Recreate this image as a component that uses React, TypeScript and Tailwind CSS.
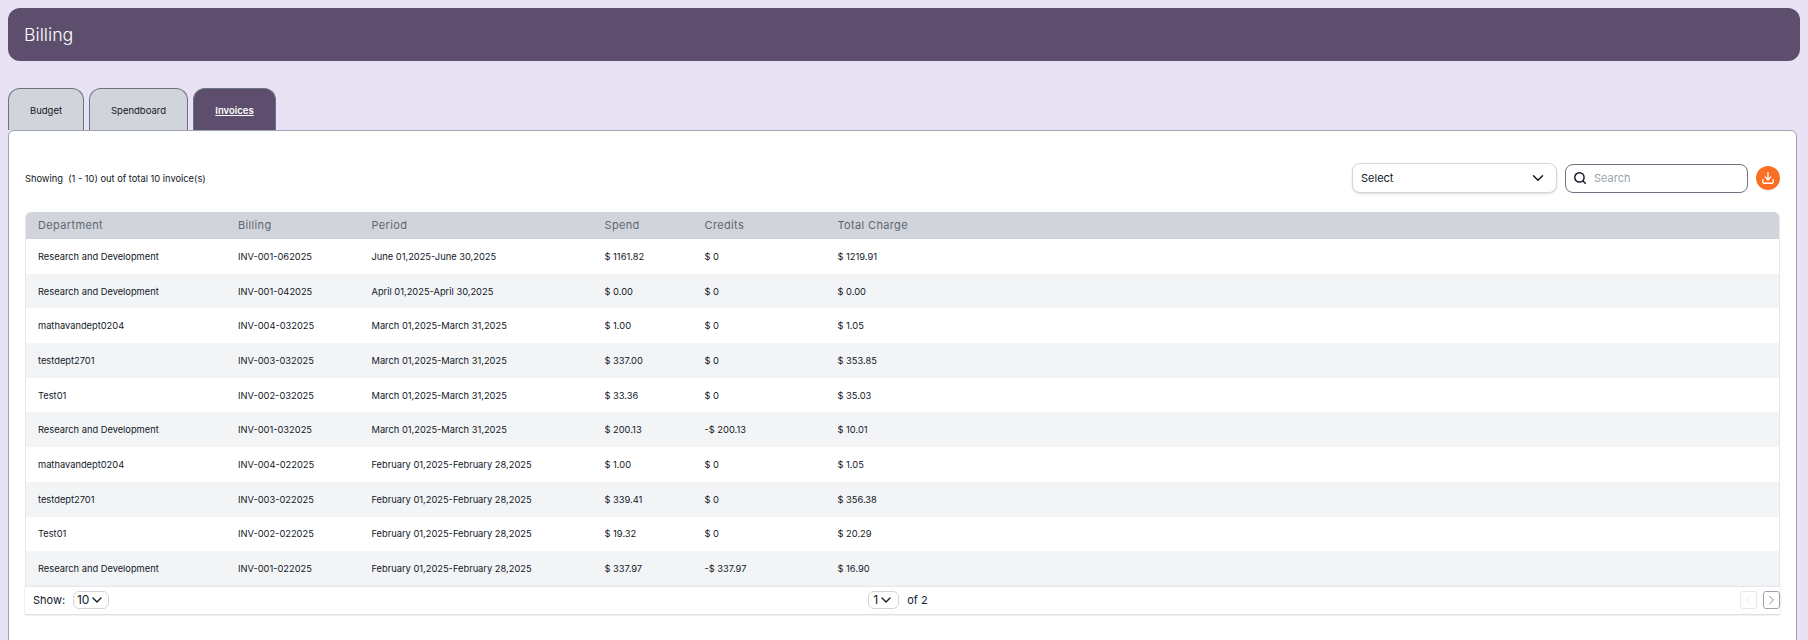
import { ChevronDown, ChevronLeft, ChevronRight, Search, Download } from 'lucide-react';

const invoices = [
  { department: 'Research and Development', billing: 'INV-001-062025', period: 'June 01,2025-June 30,2025', spend: '$ 1161.82', credits: '$ 0', total: '$ 1219.91' },
  { department: 'Research and Development', billing: 'INV-001-042025', period: 'April 01,2025-April 30,2025', spend: '$ 0.00', credits: '$ 0', total: '$ 0.00' },
  { department: 'mathavandept0204', billing: 'INV-004-032025', period: 'March 01,2025-March 31,2025', spend: '$ 1.00', credits: '$ 0', total: '$ 1.05' },
  { department: 'testdept2701', billing: 'INV-003-032025', period: 'March 01,2025-March 31,2025', spend: '$ 337.00', credits: '$ 0', total: '$ 353.85' },
  { department: 'Test01', billing: 'INV-002-032025', period: 'March 01,2025-March 31,2025', spend: '$ 33.36', credits: '$ 0', total: '$ 35.03' },
  { department: 'Research and Development', billing: 'INV-001-032025', period: 'March 01,2025-March 31,2025', spend: '$ 200.13', credits: '-$ 200.13', total: '$ 10.01' },
  { department: 'mathavandept0204', billing: 'INV-004-022025', period: 'February 01,2025-February 28,2025', spend: '$ 1.00', credits: '$ 0', total: '$ 1.05' },
  { department: 'testdept2701', billing: 'INV-003-022025', period: 'February 01,2025-February 28,2025', spend: '$ 339.41', credits: '$ 0', total: '$ 356.38' },
  { department: 'Test01', billing: 'INV-002-022025', period: 'February 01,2025-February 28,2025', spend: '$ 19.32', credits: '$ 0', total: '$ 20.29' },
  { department: 'Research and Development', billing: 'INV-001-022025', period: 'February 01,2025-February 28,2025', spend: '$ 337.97', credits: '-$ 337.97', total: '$ 16.90' },
];

const columns = 'grid grid-cols-[200px_133.5px_233px_100px_133px_1fr] pl-[13px] items-center';

export default function App() {
  return (
    <div className="h-[640px] overflow-hidden bg-[#e9e1f4] pl-2 pr-2 pt-2 font-['Inter',sans-serif] text-[#111827]">
      {/* Page title */}
      <div className="flex h-[53px] items-center rounded-xl bg-[#5d4e6d] px-4 pt-[1px] text-[17.8px] font-light text-white">Billing</div>

      {/* Tabs */}
      <div className="mt-[27px] flex h-[42px] gap-[5px] text-[9.5px]">
        <div className="flex w-[76px] items-center justify-center rounded-t-xl border border-b-0 border-[#6b7280] bg-[#d1d5db] pt-[3px]">Budget</div>
        <div className="flex w-[99px] items-center justify-center rounded-t-xl border border-b-0 border-[#6b7280] bg-[#d1d5db] pt-[3px]">Spendboard</div>
        <div className="flex w-[83px] items-center justify-center rounded-t-xl border border-b-0 border-[#6b7280] bg-[#5d4e6d] pt-[3px] font-semibold text-white underline">Invoices</div>
      </div>

      {/* Invoices card */}
      <div className="mr-[3px] h-[520px] rounded-t-md border border-[#9ca3af] bg-white px-4 pt-[31px]">
        <div className="flex h-[32px] items-center justify-between">
          <span className="pt-[2px] text-[9.3px]">Showing&nbsp; (1 - 10) out of total 10 invoice(s)</span>
          <div className="flex items-center">
            <div className="flex h-[30px] w-[205px] items-center justify-between rounded-lg border border-[#d1d5db] bg-white pl-2 pr-[9px] text-[11px] shadow-sm">
              Select
              <ChevronDown size={18} strokeWidth={2} className="text-[#111827]" />
            </div>
            <div className="ml-2 flex h-[29px] w-[183px] items-center gap-[7px] rounded-lg border border-[#6b7280] pl-[7px] text-[11px] text-[#9ca3af]">
              <Search size={14} strokeWidth={2.5} className="text-[#111827]" />
              Search
            </div>
            <div className="ml-2 flex h-6 w-6 items-center justify-center rounded-full bg-[#f97025]">
              <Download size={14} strokeWidth={2.2} className="text-white" />
            </div>
          </div>
        </div>

        <div className="mt-[18px] overflow-hidden rounded-t-md border-x border-[#e5e7eb]">
          <div className={`${columns} -mx-px h-[27px] bg-[#d1d5db] text-[11px] tracking-[0.032em] text-[#5f6673]`}>
            <span>Department</span>
            <span>Billing</span>
            <span>Period</span>
            <span>Spend</span>
            <span>Credits</span>
            <span>Total Charge</span>
          </div>
          <div>
            {invoices.map((row) => (
              <div key={row.billing} className={`${columns} -ml-px h-[34.7px] pt-[1px] text-[9.3px] even:bg-[#f3f4f6]`}>
                <span>{row.department}</span>
                <span>{row.billing}</span>
                <span>{row.period}</span>
                <span>{row.spend}</span>
                <span>{row.credits}</span>
                <span>{row.total}</span>
              </div>
            ))}
          </div>
        </div>

        {/* Pagination */}
        <div className="grid h-[28px] grid-cols-3 items-center border-t border-[#e5e7eb] pl-2 text-[11px] shadow-[0_1px_2px_rgba(0,0,0,0.18)]">
          <div className="flex items-center gap-2">
            <span>Show:</span>
            <div className="flex h-[18px] w-9 items-center justify-center rounded-md border border-[#d1d5db] text-[12px]">
              10<ChevronDown size={16} strokeWidth={2} className="text-[#111827]" />
            </div>
          </div>
          <div className="mr-[17px] flex items-center gap-2 justify-self-center">
            <div className="flex h-[18px] w-[31px] items-center justify-center rounded-md border border-[#d1d5db] text-[12px]">
              1<ChevronDown size={16} strokeWidth={2} className="text-[#111827]" />
            </div>
            <span>of 2</span>
          </div>
          <div className="flex gap-[6px] justify-self-end">
            <div className="flex h-[18px] w-[17px] items-center justify-center rounded-[3px] border border-[#e5e7eb] text-[#d1d5db]">
              <ChevronLeft size={18} strokeWidth={1} />
            </div>
            <div className="flex h-[18px] w-[17px] items-center justify-center rounded-[3px] border border-[#9ca3af] text-[#374151]">
              <ChevronRight size={18} strokeWidth={1} />
            </div>
          </div>
        </div>
      </div>
    </div>
  );
}
